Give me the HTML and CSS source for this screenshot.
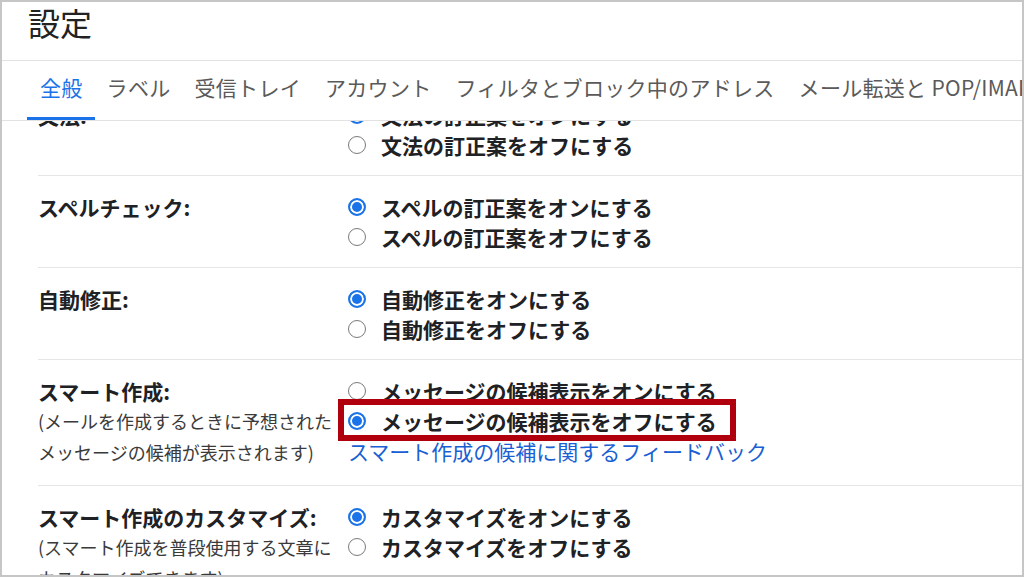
FILE: index.html
```html
<!DOCTYPE html>
<html lang="ja">
<head>
<meta charset="utf-8">
<title>設定</title>
<link rel="stylesheet" href="styles.css">
</head>
<body>
<div class="frame">
  <header class="head">
    <h1 class="title">設定</h1>
  </header>
  <nav class="tabs">
    <span class="tab active">全般</span>
    <span class="tab">ラベル</span>
    <span class="tab">受信トレイ</span>
    <span class="tab">アカウント</span>
    <span class="tab">フィルタとブロック中のアドレス</span>
    <span class="tab">メール転送と POP/IMAP</span>
  </nav>
  <div class="scroll">
    <div class="list">
      <div class="row">
        <div class="label"><div class="name">文法:</div></div>
        <div class="opts">
          <div class="opt"><span class="radio on"></span>文法の訂正案をオンにする</div>
          <div class="opt"><span class="radio"></span>文法の訂正案をオフにする</div>
        </div>
      </div>
      <div class="row">
        <div class="label"><div class="name">スペルチェック:</div></div>
        <div class="opts">
          <div class="opt"><span class="radio on"></span>スペルの訂正案をオンにする</div>
          <div class="opt"><span class="radio"></span>スペルの訂正案をオフにする</div>
        </div>
      </div>
      <div class="row">
        <div class="label"><div class="name">自動修正:</div></div>
        <div class="opts">
          <div class="opt"><span class="radio on"></span>自動修正をオンにする</div>
          <div class="opt"><span class="radio"></span>自動修正をオフにする</div>
        </div>
      </div>
      <div class="row row-tall">
        <div class="label">
          <div class="name">スマート作成:</div>
          <div class="desc">(メールを作成するときに予想された<br>メッセージの候補が表示されます)</div>
        </div>
        <div class="opts">
          <div class="opt"><span class="radio"></span>メッセージの候補表示をオンにする</div>
          <div class="opt marked"><span class="radio on"></span>メッセージの候補表示をオフにする</div>
          <div class="link">スマート作成の候補に関するフィードバック</div>
        </div>
      </div>
      <div class="row">
        <div class="label">
          <div class="name">スマート作成のカスタマイズ:</div>
          <div class="desc">(スマート作成を普段使用する文章に<br>カスタマイズできます)</div>
        </div>
        <div class="opts">
          <div class="opt"><span class="radio on"></span>カスタマイズをオンにする</div>
          <div class="opt"><span class="radio"></span>カスタマイズをオフにする</div>
        </div>
      </div>
    </div>
  </div>
</div>
</body>
</html>
```

FILE: styles.css
```css
* { box-sizing: border-box; }
html, body { margin: 0; padding: 0; background: #fff; }
body {
  font-family: "Noto Sans CJK JP", "Noto Sans", sans-serif;
  color: #202124;
}
.frame {
  width: 1024px;
  height: 577px;
  border: 2px solid #c6c6c6;
  overflow: hidden;
  display: flex;
  flex-direction: column;
  background: #fff;
}
.head {
  height: 59px;
  border-bottom: 1px solid #e2e2e2;
  padding: 0 0 0 26px;
  flex: none;
}
.title {
  margin: 0;
  font-size: 32px;
  line-height: 40px;
  font-weight: 400;
  color: #222;
}
.tabs {
  flex: none;
  height: 60px;
  display: flex;
  padding-left: 25px;
  border-bottom: 1px solid #e2e2e2;
  white-space: nowrap;
}
.tab {
  display: flex;
  align-items: center;
  padding: 0 12px 4px;
  font-size: 21px;
  letter-spacing: 0.3px;
  color: #5a5a5a;
  border-bottom: 3px solid transparent;
}
.tab.active {
  color: #1a73e8;
  border-bottom-color: #1a73e8;
  padding-left: 13px;
}
.scroll {
  flex: 1;
  overflow: hidden;
}
.list {
  margin-top: -37px;
  margin-left: 36px;
}
.row {
  display: grid;
  grid-template-columns: 310px 1fr;
  padding: 16px 0 15px;
  border-bottom: 1px solid #e6e6e6;
}
.row-tall { padding-bottom: 17px; }
.name {
  font-size: 21px;
  font-weight: 700;
  line-height: 30px;
  white-space: nowrap;
}
.desc {
  font-size: 18px;
  line-height: 31px;
  color: #3a3a3a;
  white-space: nowrap;
}
.opts { display: flex; flex-direction: column; }
.opt {
  position: relative;
  display: flex;
  align-items: center;
  gap: 15px;
  font-size: 21px;
  font-weight: 700;
  line-height: 30px;
  white-space: nowrap;
  align-self: flex-start;
}
.radio {
  width: 18px;
  height: 18px;
  border-radius: 50%;
  border: 1.5px solid #7a7a7a;
  flex: none;
  background: #fff;
}
.radio.on {
  border: 2px solid #1a73e8;
  box-shadow: inset 0 0 0 2px #fff;
  background: #1a73e8;
}
.marked::after {
  content: "";
  position: absolute;
  left: -10px;
  right: -19px;
  top: -7px;
  bottom: -5px;
  border: 6px solid #b0000e;
}
.link {
  font-size: 21px;
  line-height: 30px;
  color: #1a5fd4;
  white-space: nowrap;
}
```
